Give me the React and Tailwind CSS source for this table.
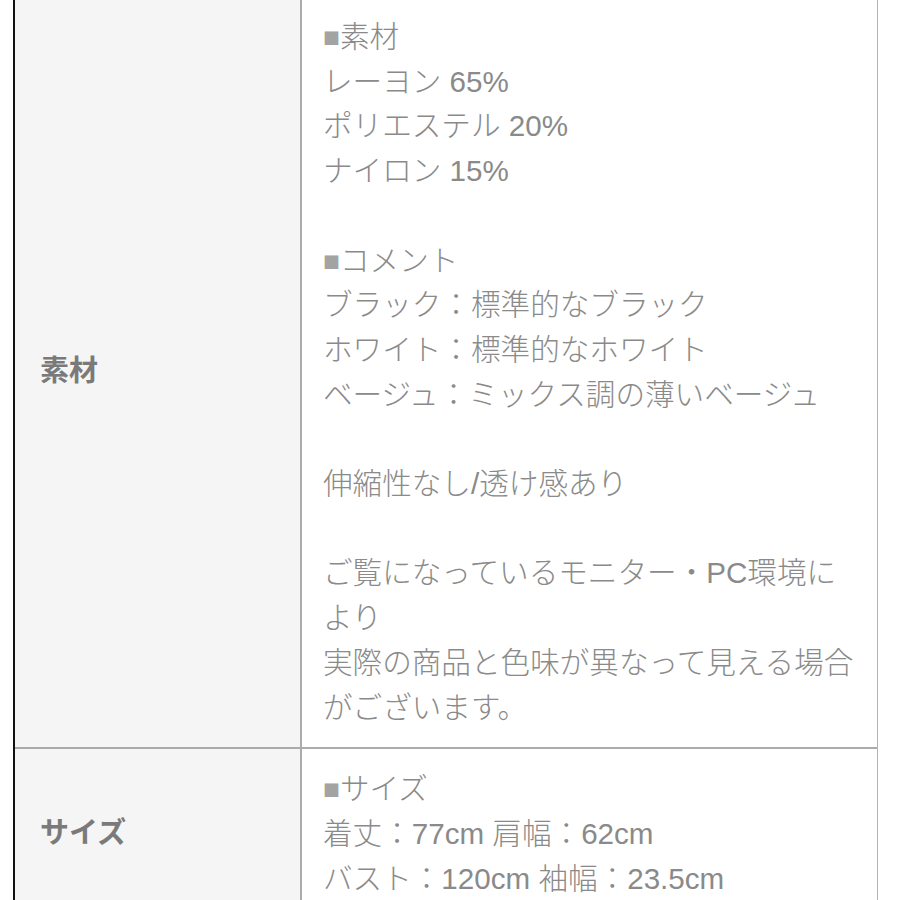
const materialLines = [
  { head: "素材" },
  "レーヨン 65%",
  "ポリエステル 20%",
  "ナイロン 15%",
  "",
  { head: "コメント" },
  "ブラック：標準的なブラック",
  "ホワイト：標準的なホワイト",
  "ベージュ：ミックス調の薄いベージュ",
  "",
  "伸縮性なし/透け感あり",
  "",
  "ご覧になっているモニター・PC環境に",
  "より",
  "実際の商品と色味が異なって見える場合",
  "がございます。",
];

const sizeLines = [
  { head: "サイズ" },
  "着丈：77cm 肩幅：62cm",
  "バスト：120cm 袖幅：23.5cm",
];

function Line({ line }) {
  if (line && typeof line === "object") {
    return (
      <div className="whitespace-nowrap">
        <span className="relative -top-[2px] font-['Noto_Sans_CJK_JP',sans-serif] text-[17px] leading-none text-[#a3a3a3]">■</span>
        {line.head}
      </div>
    );
  }
  return <div className="whitespace-nowrap">{line || "\u00a0"}</div>;
}

function Row({ label, lines, last }) {
  return (
    <div className={`grid grid-cols-[287px_1fr] ${last ? "" : "border-b-2 border-[#ababab]"}`}>
      <div className="flex items-center bg-[#f5f5f5] border-r-2 border-[#ababab] pl-[25px]">
        <span className="text-[29px] font-bold text-[#7a7a7a]">{label}</span>
      </div>
      <div className="bg-white pl-[21px] pr-4 pt-[18px] pb-[17px] text-[29.6px] font-light leading-[44.7px] text-[#8a8a8a]">
        {lines.map((l, i) => (
          <Line key={i} line={l} />
        ))}
      </div>
    </div>
  );
}

export default function App() {
  return (
    <div
      className="min-h-screen bg-white"
      style={{ fontFamily: '"Liberation Sans", "Noto Sans CJK JP", sans-serif' }}
    >
      <div className="ml-[13px] w-[865px] -mt-[3px] border-l-2 border-[#111] border-r-[1.5px] border-r-[#b3b3b3]">
        <Row label="素材" lines={materialLines} />
        <Row label="サイズ" lines={sizeLines} last />
      </div>
    </div>
  );
}
